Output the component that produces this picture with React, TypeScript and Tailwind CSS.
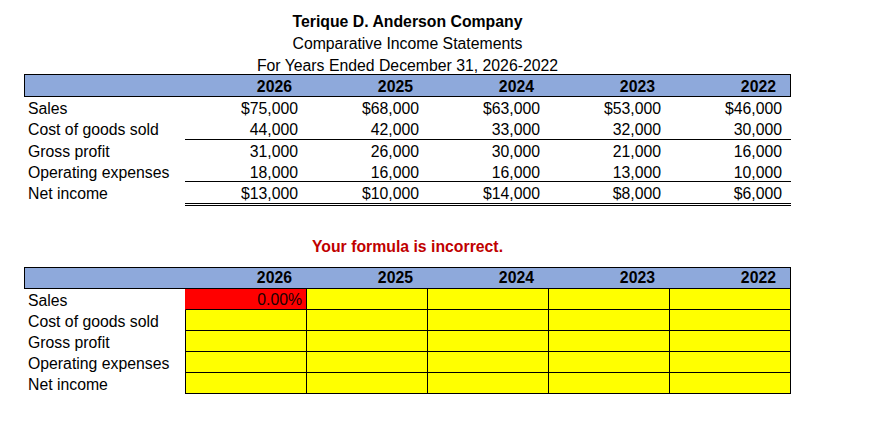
import React from "react";

const years = ["2026", "2025", "2024", "2023", "2022"];

type Row = { label: string; values: string[]; border?: "single" | "double" | null; h: string };

const rows: Row[] = [
  { label: "Sales", values: ["$75,000", "$68,000", "$63,000", "$53,000", "$46,000"], h: "h-[21px]" },
  { label: "Cost of goods sold", values: ["44,000", "42,000", "33,000", "32,000", "30,000"], border: "single", h: "h-[22px]" },
  { label: "Gross profit", values: ["31,000", "26,000", "30,000", "21,000", "16,000"], h: "h-[21px]" },
  { label: "Operating expenses", values: ["18,000", "16,000", "16,000", "13,000", "10,000"], border: "single", h: "h-[21px]" },
  { label: "Net income", values: ["$13,000", "$10,000", "$14,000", "$8,000", "$6,000"], border: "double", h: "h-[24px]" },
];

const labels = ["Sales", "Cost of goods sold", "Gross profit", "Operating expenses", "Net income"];

function Header({ h, lead }: { h: string; lead: string }) {
  return (
    <div className={`flex w-[767px] ${h} border border-black bg-[#8ea9db] font-bold ${lead}`}>
      <div className="w-[160px]" />
      {years.map((y) => (
        <div key={y} className="w-[121px] pr-[14px] text-right">
          {y}
        </div>
      ))}
    </div>
  );
}

export default function App() {
  return (
    <div
      className="min-h-[425px] w-[870px] bg-white pl-[24px] pt-[10px] text-[15.8px] text-black"
      style={{ fontFamily: '"Liberation Sans", Arial, sans-serif' }}
    >
      <div className="w-[767px] text-center">
        <div className="font-bold leading-[23px]">Terique D. Anderson Company</div>
        <div className="leading-[22px]">Comparative Income Statements</div>
        <div className="h-[19px] leading-[22px]">For Years Ended December 31, 2026-2022</div>
      </div>

      <Header h="h-[23px]" lead="leading-[23px]" />

      {rows.map((r) => (
        <div key={r.label} className={`flex w-[767px] ${r.h}`}>
          <div className="w-[161px] pl-[4px] leading-[24px]">{r.label}</div>
          <div
            className={`flex h-full w-[606px] ${
              r.border === "single"
                ? "border-b border-black"
                : r.border === "double"
                ? "border-b-[3px] border-double border-black"
                : ""
            }`}
          >
            {r.values.map((v, i) => (
              <div key={i} className={`${i === 0 ? "w-[122px]" : "w-[121px]"} pr-[9px] text-right leading-[24px]`}>
                {v}
              </div>
            ))}
          </div>
        </div>
      ))}

      <div className="mt-[30px] w-[767px] text-center font-bold leading-[21px] text-[#c00000]">
        Your formula is incorrect.
      </div>

      <div className="mt-[10px]">
        <Header h="h-[22px]" lead="leading-[20px]" />
        {labels.map((l, ri) => (
          <div key={l} className="flex h-[21px] w-[767px]">
            <div className="w-[161px] pl-[4px] leading-[24px]">{l}</div>
            {years.map((y, ci) => {
              const isRed = ri === 0 && ci === 0;
              return (
                <div
                  key={y}
                  className={`h-[21px] border-b border-r border-black ${
                    ci === 0 ? "w-[122px] border-l" : "w-[121px]"
                  } ${isRed ? "border-l-[#ff0000] bg-[#ff0000] pr-[4px] text-right leading-[22px] text-[#200000]" : "bg-[#ffff00]"}`}
                >
                  {isRed ? "0.00%" : ""}
                </div>
              );
            })}
          </div>
        ))}
      </div>
    </div>
  );
}
